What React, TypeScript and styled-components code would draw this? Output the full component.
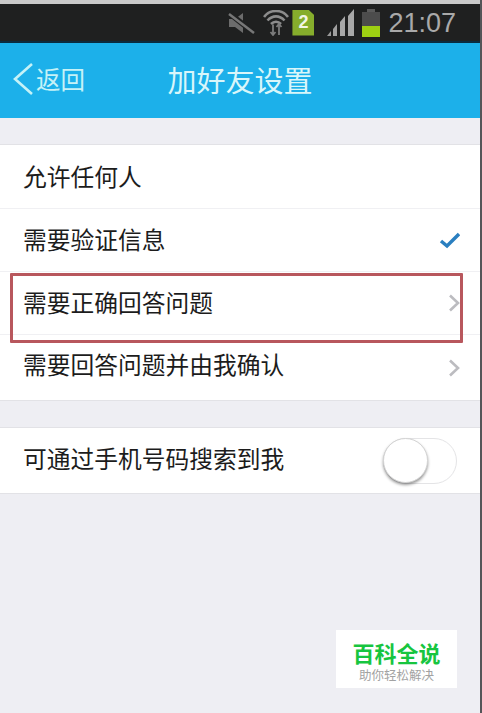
import React from "react";
import styled, { createGlobalStyle } from "styled-components";

const CJK = `"Noto Sans CJK SC", "Liberation Sans", sans-serif`;

const GlobalStyle = createGlobalStyle`
  html, body {
    margin: 0;
    padding: 0;
    background: #eeeef3;
  }
  * {
    box-sizing: border-box;
  }
`;

export default function App() {
  return (
    <Screen>
      <GlobalStyle />
      <TopEdge />
      <StatusBar>
        <svg width="28" height="24" viewBox="0 0 28 24">
          <path d="M2 8h6l8-6v20l-8-6H2z" fill="#6c6c6c" />
          <path d="M2 2l25 20" stroke="#1f2020" strokeWidth="5.500" />
          <path d="M2 3l25 19" stroke="#777" strokeWidth="2.500" />
        </svg>
        <WifiIcon>
          <svg width="26" height="26" viewBox="0 0 26 26" fill="none">
            <path d="M1 7C7-1 19-1 25 7" stroke="#8c8c8c" strokeWidth="2.600" />
            <path d="M4.500 10.500c5-5.500 12-5.500 17 0" stroke="#8c8c8c" strokeWidth="2.600" />
            <path d="M8 14c3-3 7-3 10 0" stroke="#8c8c8c" strokeWidth="2.600" />
            <path d="M10 14.500v10M7.500 22l2.500 3 2.500-3" stroke="#7c7c7c" strokeWidth="1.800" />
            <path d="M16 25V14.500M13.500 17l2.500-3 2.500 3" stroke="#7c7c7c" strokeWidth="1.800" />
          </svg>
        </WifiIcon>
        <SimBadge>2</SimBadge>
        <SignalIcon>
          <svg width="30" height="28" viewBox="0 0 30 28">
            <path d="M1 27l4-5v5z" fill="#9a9a9a" />
            <path d="M7 20l4-5v12H7z" fill="#a0a0a0" />
            <path d="M14 13l5-6v20h-5z" fill="#a8a8a8" />
            <path d="M22 7l6-7v27h-6z" fill="#a8a8a8" />
          </svg>
        </SignalIcon>
        <Battery>
          <BatteryCap />
          <BatteryBody>
            <BatteryFill />
          </BatteryBody>
        </Battery>
        <Clock>21:07</Clock>
      </StatusBar>
      <Header>
        <BackButton>
          <svg width="22" height="34" viewBox="0 0 22 34" fill="none">
            <path d="M20 2L3 17l17 15" stroke="#c5f2f7" strokeWidth="2.600" />
          </svg>
          <BackLabel>返回</BackLabel>
        </BackButton>
        <Title>加好友设置</Title>
      </Header>
      <Section>
        <Row $height={63}>
          <RowLabel>允许任何人</RowLabel>
        </Row>
        <Row $height={63} $divider>
          <RowLabel>需要验证信息</RowLabel>
          <svg width="22" height="18" viewBox="0 0 22 18" fill="none">
            <path d="M3 10l6 5L21 3" stroke="#2a7fc0" strokeWidth="3.500" />
          </svg>
        </Row>
        <Row $height={63} $divider>
          <RowLabel>需要正确回答问题</RowLabel>
          <Chevron />
        </Row>
        <Row $height={66} $divider>
          <RowLabel $lift={8}>需要回答问题并由我确认</RowLabel>
          <Chevron />
        </Row>
      </Section>
      <Section>
        <Row $height={65}>
          <RowLabel $lift={6}>可通过手机号码搜索到我</RowLabel>
          <Toggle>
            <Knob />
          </Toggle>
        </Row>
      </Section>
      <Highlight />
      <Watermark>
        <BrandName>百科全说</BrandName>
        <BrandSlogan>助你轻松解决</BrandSlogan>
      </Watermark>
    </Screen>
  );
}

function Chevron() {
  return (
    <svg width="12" height="18" viewBox="0 0 12 18" fill="none">
      <path d="M2 1.500L10 9l-8 7.500" stroke="#bcbcc0" strokeWidth="2.600" />
    </svg>
  );
}

const Screen = styled.div`
  position: relative;
  width: 482px;
  height: 713px;
  overflow: hidden;
  background: #eeeef3;
  border-right: 2px solid #555558;
  font-family: ${CJK};
`;

const TopEdge = styled.div`
  height: 4px;
  background: #c9c9c9;
`;

const StatusBar = styled.div`
  height: 39px;
  display: flex;
  align-items: center;
  justify-content: flex-end;
  padding-right: 24px;
  background: #1f2020;
  border-bottom: 2px solid #0a2a3e;
`;

const WifiIcon = styled.div`
  display: flex;
  margin-left: 8px;
`;

const SimBadge = styled.div`
  width: 22px;
  height: 26px;
  margin-left: 3px;
  display: flex;
  align-items: center;
  justify-content: center;
  background: #86ad2c;
  clip-path: polygon(0 0, 72% 0, 100% 22%, 100% 100%, 0 100%);
  color: #f2f5e6;
  font-family: "Liberation Sans", sans-serif;
  font-size: 18px;
  font-weight: 700;
`;

const SignalIcon = styled.div`
  display: flex;
  margin-left: 12px;
`;

const Battery = styled.div`
  width: 18px;
  margin-left: 6px;
  display: flex;
  flex-direction: column;
  align-items: center;
`;

const BatteryCap = styled.div`
  width: 8px;
  height: 3px;
  background: #5a5a5a;
`;

const BatteryBody = styled.div`
  width: 18px;
  height: 25px;
  display: flex;
  align-items: flex-end;
  background: #4c4c4c;
`;

const BatteryFill = styled.div`
  width: 100%;
  height: 11px;
  background: #9ed012;
`;

const Clock = styled.div`
  margin-left: 8px;
  color: #a9a9a9;
  font-family: "Liberation Sans", sans-serif;
  font-size: 27px;
  line-height: 30px;
`;

const Header = styled.div`
  position: relative;
  height: 75px;
  display: flex;
  align-items: center;
  justify-content: center;
  background: #1cb0ea;
`;

const BackButton = styled.div`
  position: absolute;
  left: 12px;
  top: 19px;
  display: flex;
  align-items: center;
  gap: 2px;
`;

const BackLabel = styled.span`
  color: #c5f2f7;
  font-size: 24.5px;
  line-height: 34px;
`;

const Title = styled.div`
  margin-top: -3px;
  color: #d8f6fa;
  font-size: 29px;
  line-height: 40px;
`;

const Section = styled.div`
  margin-top: 26px;
  background: #fff;
  border-top: 1px solid #e2e2e6;
  border-bottom: 1px solid #e2e2e6;
`;

const Row = styled.div<{ $height: number; $divider?: boolean }>`
  height: ${(p) => p.$height}px;
  display: flex;
  align-items: center;
  justify-content: space-between;
  padding: 0 20px 0 23px;
  border-top: ${(p) => (p.$divider ? "1px solid #f0f0f3" : "none")};
`;

const RowLabel = styled.span<{ $lift?: number }>`
  margin-top: -${(p) => p.$lift ?? 2}px;
  color: #1c1c1c;
  font-size: 23.750px;
  line-height: 32px;
`;

const Toggle = styled.div`
  position: relative;
  width: 74px;
  height: 46px;
  margin-right: 3px;
  border: 1px solid #e4e4e6;
  border-radius: 23px;
  background: #fff;
`;

const Knob = styled.div`
  position: absolute;
  left: -1px;
  top: -1px;
  width: 45px;
  height: 45px;
  border-radius: 50%;
  background: #fff;
  border: 1px solid #d4d4d4;
  box-shadow: 0 2px 3px rgba(0, 0, 0, 0.4);
`;

const Highlight = styled.div`
  position: absolute;
  left: 10px;
  top: 273px;
  width: 453px;
  height: 70px;
  border: 3px solid #b8575d;
  border-radius: 1px;
`;

const Watermark = styled.div`
  position: absolute;
  left: 336px;
  top: 630px;
  width: 121px;
  height: 58px;
  display: flex;
  flex-direction: column;
  align-items: center;
  padding-top: 10px;
  background: #fff;
`;

const BrandName = styled.div`
  color: #17c53f;
  font-size: 22px;
  font-weight: 700;
  line-height: 24px;
`;

const BrandSlogan = styled.div`
  margin-top: 4px;
  color: #a2a2a2;
  font-size: 12.500px;
  line-height: 14px;
`;
